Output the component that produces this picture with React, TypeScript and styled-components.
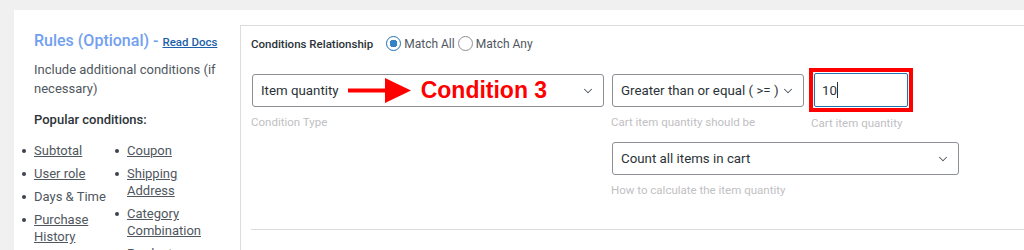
import React from 'react'
import styled, { createGlobalStyle } from 'styled-components'
import { ChevronDown } from 'lucide-react'

const GlobalStyle = createGlobalStyle`
	html, body {
		margin: 0;
		padding: 0;
		background: #f0f0f1;
		font-family: Roboto, 'Noto Sans', Arial, sans-serif;
		color: #50575e;
	}
	* {
		box-sizing: border-box;
	}
`

const conditionsLeft = [
	{ label: 'Subtotal', link: true },
	{ label: 'User role', link: true },
	{ label: 'Days & Time', link: false },
	{ label: 'Purchase History', link: true },
]

const conditionsRight = [
	{ label: 'Coupon', link: true },
	{ label: 'Shipping Address', link: true },
	{ label: 'Category Combination', link: true },
	{ label: 'Product', link: true },
]

function ConditionList({ items }: { items: { label: string; link: boolean }[] }) {
	return (
		<StyledList>
			{items.map(({ label, link }) => (
				<li key={label}>{link ? <a href="#">{label}</a> : label}</li>
			))}
		</StyledList>
	)
}

function Chevron() {
	return <ChevronDown size={14} strokeWidth={1.8} color="#50575e" />
}

function SelectBox({ value, width }: { value: string; width: number }) {
	return (
		<StyledSelect $width={width}>
			<span>{value}</span>
			<Chevron />
		</StyledSelect>
	)
}

function Arrow() {
	return (
		<svg width="63" height="25" viewBox="0 0 63 25">
			<rect x="0" y="10.5" width="40" height="4" fill="#ff0000" />
			<polygon points="37,0 63,12.5 37,25" fill="#ff0000" />
		</svg>
	)
}

export default function App() {
	return (
		<>
			<GlobalStyle />
			<StyledPage>
				<StyledPanel>
					<StyledSidebar>
						<StyledTitle>
							Rules (Optional) - <a href="#">Read Docs</a>
						</StyledTitle>
						<StyledIntro>Include additional conditions (if necessary)</StyledIntro>
						<StyledPopular>Popular conditions:</StyledPopular>
						<StyledColumns>
							<ConditionList items={conditionsLeft} />
							<ConditionList items={conditionsRight} />
						</StyledColumns>
					</StyledSidebar>
					<StyledMain>
						<StyledRelationship>
							<strong>Conditions Relationship</strong>
							<StyledRadioGroup>
								<StyledRadio $checked />
								<span>Match All</span>
								<StyledRadio />
								<span>Match Any</span>
							</StyledRadioGroup>
						</StyledRelationship>
						<StyledGrid>
							<StyledField>
								<StyledSelect $width={352}>
									<StyledInline>
										<span>Item quantity</span>
										<Arrow />
										<StyledCallout>Condition 3</StyledCallout>
									</StyledInline>
									<Chevron />
								</StyledSelect>
								<StyledHint>Condition Type</StyledHint>
							</StyledField>
							<StyledField>
								<SelectBox value="Greater than or equal ( >= )" width={192} />
								<StyledHint>Cart item quantity should be</StyledHint>
							</StyledField>
							<StyledField>
								<StyledHighlight>
									<StyledInput>
										10<StyledCaret />
									</StyledInput>
								</StyledHighlight>
								<StyledHint $tight>Cart item quantity</StyledHint>
							</StyledField>
							<StyledField $column={2}>
								<SelectBox value="Count all items in cart" width={347} />
								<StyledHint>How to calculate the item quantity</StyledHint>
							</StyledField>
						</StyledGrid>
						<StyledDivider />
					</StyledMain>
				</StyledPanel>
			</StyledPage>
		</>
	)
}

const StyledPage = styled.div`
	padding: 10px 0 0 14px;
	height: 250px;
	overflow: hidden;
`

const StyledPanel = styled.div`
	display: flex;
	background: #fff;
	height: 260px;
`

const StyledSidebar = styled.div`
	width: 226px;
	flex: none;
	padding: 21px 0 0 20px;
`

const StyledTitle = styled.div`
	font-size: 16px;
	font-weight: 500;
	color: #72a0f0;
	line-height: 20px;
	a {
		font-size: 11.5px;
		font-weight: 500;
		color: #1d5fa8;
		text-decoration: underline;
	}
`

const StyledIntro = styled.p`
	margin: 8px 0 0;
	font-size: 13px;
	line-height: 19px;
	color: #50575e;
	width: 190px;
`

const StyledPopular = styled.div`
	margin-top: 12px;
	font-size: 13px;
	font-weight: 500;
	color: #2c3338;
	line-height: 19px;
`

const StyledColumns = styled.div`
	display: grid;
	grid-template-columns: 93px 100px;
	margin: 13px 0 0 0;
`

const StyledList = styled.ul`
	margin: 0;
	padding: 0;
	list-style: none;
	li {
		position: relative;
		font-size: 13px;
		line-height: 17px;
		margin-bottom: 6px;
		color: #50575e;
	}
	li::before {
		content: '';
		position: absolute;
		left: -12px;
		top: 7px;
		width: 4px;
		height: 4px;
		border-radius: 50%;
		background: #3c434a;
	}
	a {
		color: #50575e;
		text-decoration: underline;
	}
`

const StyledMain = styled.div`
	flex: 1;
	margin-top: 15px;
	border-top: 1px solid #dcdcde;
	border-left: 1px solid #dcdcde;
	padding: 10px 0 0 11px;
`

const StyledRelationship = styled.div`
	display: flex;
	align-items: center;
	gap: 13px;
	height: 15px;
	margin-left: -1px;
	strong {
		font-size: 11.5px;
		font-weight: 500;
		color: #2c3338;
	}
`

const StyledRadioGroup = styled.div`
	display: flex;
	align-items: center;
	gap: 3px;
	font-size: 12px;
	color: #50575e;
`

const StyledRadio = styled.span<{ $checked?: boolean }>`
	display: inline-block;
	width: 15px;
	height: 15px;
	border-radius: 50%;
	border: 1px solid ${(p) => (p.$checked ? '#2271b1' : '#8c8f94')};
	background: ${(p) => (p.$checked ? 'radial-gradient(circle, #3582c4 0 3.6px, #fff 4px)' : '#fff')};
`

const StyledGrid = styled.div`
	display: grid;
	grid-template-columns: 352px 192px 102px;
	column-gap: 8px;
	row-gap: 6px;
	margin-top: 17px;
	align-items: start;
`

const StyledField = styled.div<{ $column?: number }>`
	display: flex;
	flex-direction: column;
	grid-column: ${(p) => (p.$column ? `${p.$column} / span 2` : 'auto')};
`

const StyledSelect = styled.div<{ $width: number }>`
	width: ${(p) => p.$width}px;
	height: 33px;
	margin-top: 6px;
	border: 1px solid #8c8f94;
	border-radius: 3px;
	display: flex;
	align-items: center;
	justify-content: space-between;
	padding: 0 8px 0 8px;
	font-size: 13.3px;
	color: #2c3338;
	white-space: nowrap;
`

const StyledInline = styled.div`
	display: flex;
	align-items: center;
	svg {
		margin: 0 10px 0 9px;
	}
`

const StyledCallout = styled.span`
	font-family: 'Liberation Sans', Arial, sans-serif;
	font-weight: 700;
	font-size: 23px;
	color: #ff0000;
`

const StyledHighlight = styled.div`
	width: 104px;
	height: 44px;
	margin-left: -3px;
	border: 4px solid #ff0000;
	padding: 1px;
	background: #fff;
`

const StyledInput = styled.div`
	height: 34px;
	border: 1px solid #2271b1;
	border-radius: 2px;
	display: flex;
	align-items: center;
	padding-left: 7px;
	font-size: 13.3px;
	color: #2c3338;
`

const StyledCaret = styled.span`
	display: inline-block;
	width: 1px;
	height: 16px;
	background: #2c3338;
`

const StyledHint = styled.div<{ $tight?: boolean }>`
	margin-top: ${(p) => (p.$tight ? 4 : 8)}px;
	margin-left: -1px;
	font-size: 11.5px;
	line-height: 14px;
	color: #bfc0c3;
	white-space: nowrap;
`

const StyledDivider = styled.div`
	margin-top: 32px;
	height: 1px;
	background: #dcdcde;
	margin-left: -1px;
`
